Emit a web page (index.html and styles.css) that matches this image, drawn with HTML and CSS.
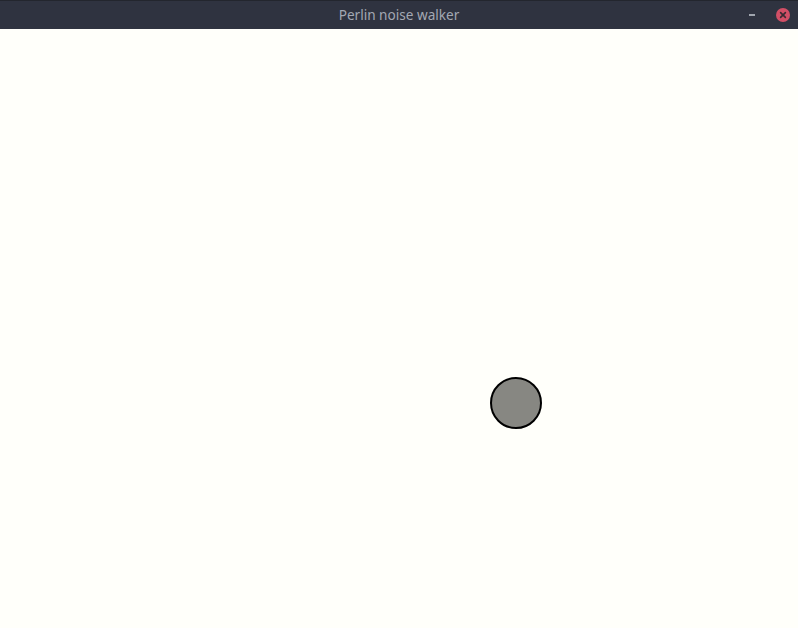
FILE: index.html
```html
<!DOCTYPE html>
<html>
<head>
<meta charset="utf-8">
<link rel="stylesheet" href="styles.css">
</head>
<body>
<div class="window">
  <div class="titlebar">
    <div class="title">Perlin noise walker</div>
    <div class="controls">
      <span class="min"></span>
      <span class="close">
        <svg width="14" height="14" viewBox="0 0 14 14">
          <circle cx="7" cy="7" r="7" fill="#d24f66"/>
          <path d="M4.6 4.6 L9.4 9.4 M9.4 4.6 L4.6 9.4" stroke="#3a2a32" stroke-width="1.6" stroke-linecap="round"/>
        </svg>
      </span>
    </div>
  </div>
  <div class="canvas">
    <div class="walker"></div>
  </div>
</div>
</body>
</html>
```
FILE: styles.css
```css
html, body {
  margin: 0;
  padding: 0;
  width: 798px;
  height: 628px;
  overflow: hidden;
  background: #fffffa;
}
.window {
  display: flex;
  flex-direction: column;
  width: 798px;
  height: 628px;
}
.titlebar {
  position: relative;
  height: 29px;
  flex: none;
  background: #2f3340;
  border-top: 1px solid #23262e;
  box-sizing: border-box;
  display: flex;
  align-items: center;
  justify-content: center;
}
.title {
  font-family: "Noto Sans", "Open Sans", sans-serif;
  font-size: 13.6px;
  color: #a3a8b3;
  line-height: 1;
}
.controls {
  position: absolute;
  right: 8px;
  top: 7px;
  display: flex;
  align-items: center;
  gap: 21px;
}
.min {
  display: block;
  width: 6px;
  height: 2px;
  background: #a0a5ae;
}
.close {
  display: block;
  width: 14px;
  height: 14px;
}
.close svg { display: block; }
.canvas {
  position: relative;
  flex: 1;
  background: #fffffa;
}
.walker {
  position: absolute;
  left: 490px;
  top: 348px;
  width: 48px;
  height: 48px;
  border-radius: 50%;
  background: #878782;
  border: 2px solid #000;
}
```
